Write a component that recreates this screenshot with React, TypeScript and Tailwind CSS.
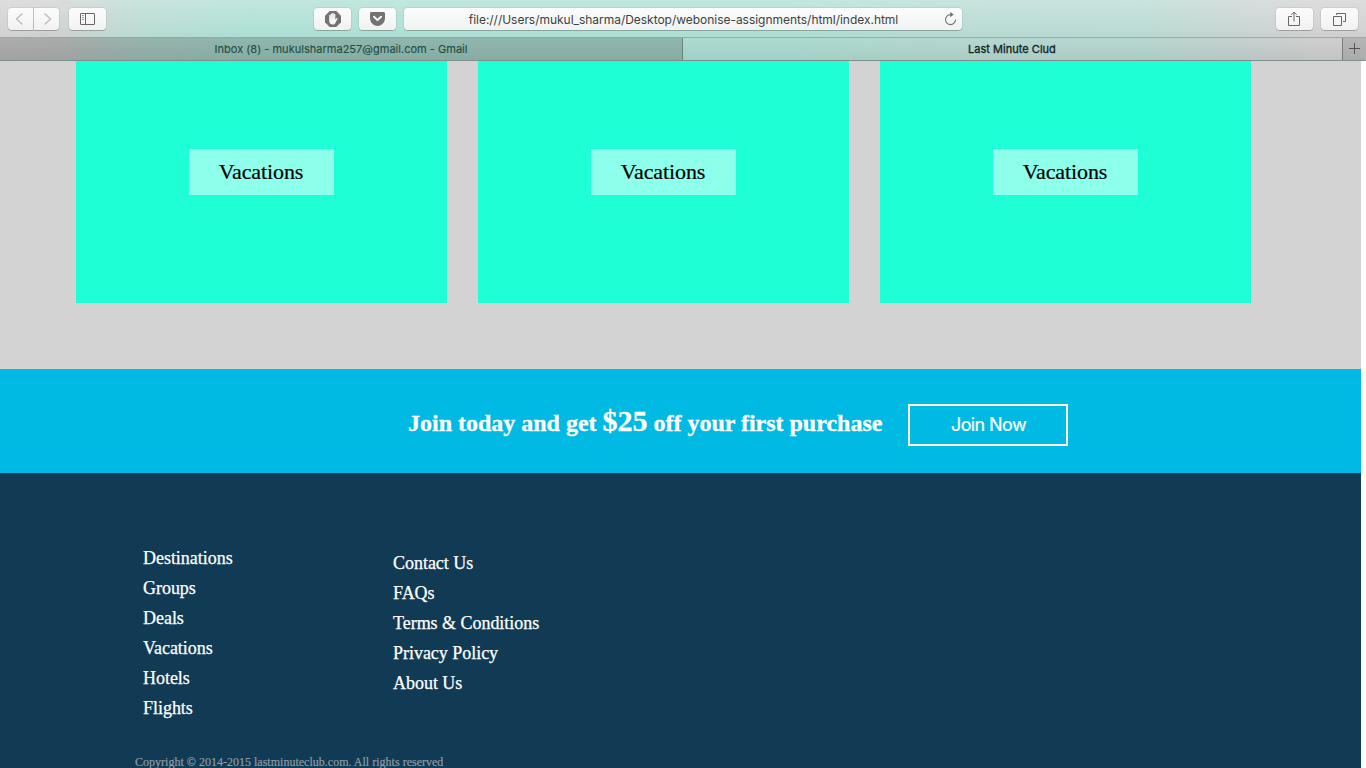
import type { ReactNode } from "react";

const primaryLinks = ["Destinations", "Groups", "Deals", "Vacations", "Hotels", "Flights"];
const secondaryLinks = ["Contact Us", "FAQs", "Terms & Conditions", "Privacy Policy", "About Us"];

function ToolButton({ className = "", children }: { className?: string; children: ReactNode }) {
  return (
    <button
      className={`flex h-[22px] shrink-0 items-center justify-center bg-linear-to-b from-[#fcfcfc] to-[#f0f2f1] shadow-[0_1px_0_rgba(0,0,0,0.2),0_0_0_1px_rgba(0,0,0,0.06)] ${className}`}
    >
      {children}
    </button>
  );
}

function Toolbar() {
  return (
    <div className="flex h-[37px] items-start pt-2">
      <ToolButton className="ml-2 w-[25px] rounded-l pr-[2px]">
        <svg width="9" height="14" viewBox="0 0 9 14" fill="none" stroke="#bdbdbd" strokeWidth="1.4">
          <path d="M7.5 1.5 1.5 7l6 5.5" />
        </svg>
      </ToolButton>
      <ToolButton className="ml-px w-[25px] rounded-r pl-px">
        <svg width="9" height="14" viewBox="0 0 9 14" fill="none" stroke="#bdbdbd" strokeWidth="1.4">
          <path d="m1.5 1.5 6 5.5-6 5.5" />
        </svg>
      </ToolButton>
      <ToolButton className="ml-[10px] w-[37px] rounded">
        <svg width="15" height="12" viewBox="0 0 15 12" fill="none" stroke="#666">
          <rect x=".5" y=".5" width="14" height="11" rx=".5" />
          <path d="M5.5 1v10" />
          <path d="M2 2.5h2M2 4.5h2M2 6.5h2" stroke="#999" />
        </svg>
      </ToolButton>
      <ToolButton className="ml-[208px] w-[37px] rounded">
        <svg width="16" height="16" viewBox="0 0 16 16">
          <path fill="#737373" d="M4.7 0h6.6L16 4.7v6.6L11.3 16H4.7L0 11.3V4.7z" />
          <path
            fill="#f5f5f5"
            d="M4.2 4.4c0-.9 1.4-.9 1.4 0V7h.1V3.200c0-.9 1.500-.9 1.500 0v3.500h.1V2.500c0-.9 1.500-.9 1.500 0v4.200h.1V3.300c0-.9 1.400-.9 1.400 0v5.200l.9-1.100c.6-.7 1.600-.2 1.200.5l-2 4c-.6 1.200-1.300 1.600-2.700 1.600-2.300 0-3.500-1.300-3.500-3.700z"
          />
        </svg>
      </ToolButton>
      <ToolButton className="ml-2 w-[37px] rounded">
        <svg width="15" height="14" viewBox="0 0 15 14">
          <path fill="#737373" d="M1.5 0h12C14.4 0 15 .6 15 1.500V6c0 4.300-3.300 8-7.500 8S0 10.300 0 6V1.500C0 .6.6 0 1.500 0z" />
          <path d="m4 4.700 3.500 3.400L11 4.700" fill="none" stroke="#fafafa" strokeWidth="2" strokeLinecap="round" strokeLinejoin="round" />
        </svg>
      </ToolButton>
      <div className="ml-2 flex h-[22px] w-[558px] items-center rounded bg-linear-to-b from-[#fbfefd] to-[#f0f3f2] pr-[5px] pl-[19px] shadow-[0_1px_0_rgba(0,0,0,0.2),0_0_0_1px_rgba(0,0,0,0.06)]">
        <span className="flex-1 pt-px text-center text-[12px] tracking-[-0.03px] whitespace-nowrap text-[#404040]">
          file:///Users/mukul_sharma/Desktop/webonise-assignments/html/index.html
        </span>
        <svg width="13" height="14" viewBox="0 0 13 14" fill="none" stroke="#737373" strokeWidth="1.100">
          <path d="M8 2.600H6.500a5 5 0 1 0 5 5" />
          <path d="M6.200 0v5.200L9.800 2.600z" fill="#737373" stroke="none" />
        </svg>
      </div>
      <ToolButton className="ml-[314px] w-[37px] rounded pr-px">
        <svg width="12" height="16" viewBox="0 0 12 16" fill="none" stroke="#666">
          <path d="M4 5.500H.5v9h11v-9H8M6 10.500V1.300M3.300 3.800 6 1.100l2.700 2.700" />
        </svg>
      </ToolButton>
      <ToolButton className="ml-2 w-[37px] rounded">
        <svg width="13" height="13" viewBox="0 0 13 13" fill="none" stroke="#666">
          <path d="M.5 3.500h8v9h-8zM3.500 2V.5h9v8H10" />
        </svg>
      </ToolButton>
    </div>
  );
}

function TabBar() {
  return (
    <div className="flex h-6 border-t border-b border-t-black/20 border-b-[#7f8f8b] text-[11px]">
      <div className="flex w-[683px] items-center justify-center border-r border-black/25 bg-black/17 text-[#1f5046]">
        <span className="pt-px tracking-[0.02px] whitespace-nowrap [-webkit-text-stroke:0.15px_#1f5046]">
          Inbox (8) - mukulsharma257@gmail.com - Gmail
        </span>
      </div>
      <div className="flex w-[659px] items-center justify-center pr-px text-[#10231f]">
        <span className="pt-px tracking-[0.02px] whitespace-nowrap [-webkit-text-stroke:0.3px_#10231f]">Last Minute Clud</span>
      </div>
      <div className="flex w-6 items-center justify-center border-l border-black/30 bg-black/12">
        <svg width="11" height="11" viewBox="0 0 11 11" stroke="#555" className="-mt-px">
          <path d="M5.500 0v11M0 5.500h11" />
        </svg>
      </div>
    </div>
  );
}

function LinkColumn({ links }: { links: string[] }) {
  return (
    <ul className="text-[18px] leading-[30px] tracking-[-0.03px] text-white [-webkit-text-stroke:0.25px_white]">
      {links.map((label) => (
        <li key={label}>{label}</li>
      ))}
    </ul>
  );
}

export default function App() {
  return (
    <div className="flex h-screen flex-col overflow-hidden bg-white font-['Liberation_Serif',serif]">
      <header className="h-[61px] shrink-0 bg-[linear-gradient(180deg,rgba(255,255,255,0.22),transparent_50%,rgba(0,0,0,0.08)),linear-gradient(90deg,#d4d4d4_0%,#d0d3d2_4%,#b9ddd4_11%,#b0e0d5_18%,#b0e0d5_58%,#b9dcd4_70%,#bbdbd4_84%,#c8d6d3_90%,#d3d3d3_96%)] font-['Inter',sans-serif]">
        <Toolbar />
        <TabBar />
      </header>
      <div className="flex w-[1361px] flex-1 flex-col">
        <section className="flex h-[308px] shrink-0 gap-[31px] bg-[#d3d3d3] pl-[76px]">
          {[0, 1, 2].map((card) => (
            <div key={card} className="flex h-[242px] w-[371px] justify-center bg-[#1effd6] pt-[88px]">
              <div className="flex h-[46px] w-[145px] items-center justify-center bg-[#8effea] pr-px pb-[2px] text-[22px] tracking-[-0.1px] text-black [-webkit-text-stroke:0.2px_black]">
                Vacations
              </div>
            </div>
          ))}
        </section>
        <section className="flex h-[104px] shrink-0 items-start bg-[#00bae3] pl-[408px] text-white">
          <h2 className="w-[500px] pt-[34px] text-[24px] leading-9 font-bold tracking-[-0.01px] whitespace-nowrap [-webkit-text-stroke:0.3px_white]">
            Join today and get <span className="text-[30px]">$25</span> off your first purchase
          </h2>
          <button className="mt-[35px] h-[42px] w-[160px] border-2 border-white pb-[2px] pl-px font-['Inter',sans-serif] text-[18px] tracking-[-0.6px] [-webkit-text-stroke:0.2px_white]">
            Join Now
          </button>
        </section>
        <footer className="flex-1 bg-[#113a54] pt-[70px]">
          <div className="flex h-[211px] pl-[143px]">
            <div className="w-[250px]">
              <LinkColumn links={primaryLinks} />
            </div>
            <div className="pt-[5px]">
              <LinkColumn links={secondaryLinks} />
            </div>
          </div>
          <p className="pl-[135px] text-[12px] leading-4 tracking-[0.01px] text-[#8f9ba6] [-webkit-text-stroke:0.2px_#8f9ba6]">
            Copyright © 2014-2015 lastminuteclub.com. All rights reserved
          </p>
        </footer>
      </div>
    </div>
  );
}
